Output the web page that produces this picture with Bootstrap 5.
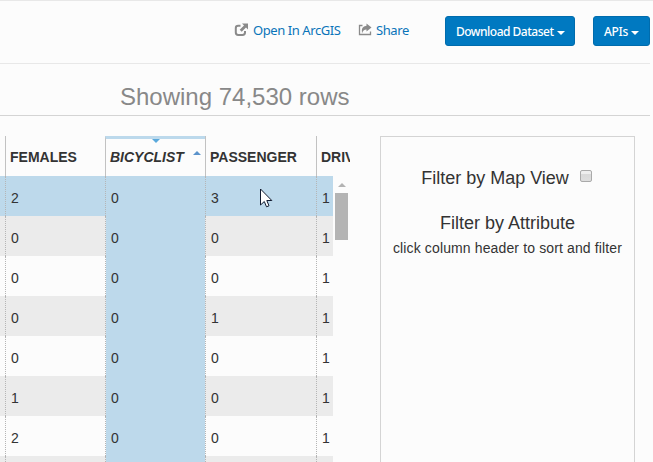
<!DOCTYPE html>
<html lang="en">
<head>
<meta charset="utf-8">
<title>Dataset table</title>
<link rel="stylesheet" href="https://cdn.jsdelivr.net/npm/bootstrap@5.3.0/dist/css/bootstrap.min.css">
<style>
html,body{height:462px;overflow:hidden}
body{background:#fcfcfc;color:#333;font-family:"Liberation Sans",Arial,sans-serif;font-size:14px;line-height:20px}
.topline{height:1px;background:#e8e8e8}
.toolbar{height:63px;width:650px;border-bottom:1px solid #e8e8e8;font-family:"Noto Sans",sans-serif;font-size:13px}
.toolbar a{color:#0a74b9;letter-spacing:-.42px;white-space:nowrap}
.link-label{margin:19px 0 0 4px}
.link-open{margin-left:234px;width:124px}
.link-share{width:87px}
.toolbar .btn{--bs-btn-color:#fff;--bs-btn-bg:#0079c1;--bs-btn-border-color:#006cad;--bs-btn-border-radius:3px;height:30px;margin-top:15px;font-size:12px;line-height:18px;padding:6px 0 4px 10px;text-align:left;letter-spacing:-.5px;font-weight:500;white-space:nowrap}
.toolbar .dropdown-toggle::after{margin-left:4px;border-top-width:4px;border-left-width:4px;border-right-width:4px;vertical-align:1px}
.btn-data{width:130px}
.toolbar .btn-api{width:57px;margin-left:18px;letter-spacing:-.3px}
.toolbar .btn-api::after{margin-left:3px}
.summary{width:650px;height:52px;border-bottom:1px solid #d4d4d4;padding:17px 0 0 120px}
.summary h1{font-size:24px;line-height:32px;color:#888;font-weight:400}
.explorer{padding-top:20px}
.grid-pane{width:350px;height:326px}
.grid-line{display:grid;grid-template-columns:5px 100px 100px 111px 34px}
.grid-head{height:40px;font-weight:700}
.grid-head>div{border-left:1px solid #c2c2c2;padding:11px 0 0 4px;white-space:nowrap;overflow:hidden}
.grid-head>div:first-child{border:0}
.grid-head .sorted{font-style:italic;border-top:3px solid #bcd9ec;padding-top:8px;overflow:visible}
.tri{position:absolute;width:0;height:0;border:4px solid transparent}
.tri-down{left:46px;top:0;border-top-color:#5aa9dc;border-bottom:0}
.tri-up{right:4px;top:12px;border-bottom:4px solid #5b93cb;border-top:0}
.grid-body{width:333px;height:286px}
.grid-body .grid-line{height:40px}
.grid-body .grid-line>div{padding:12px 0 0 5px;border-left:1px dotted #b5b5b5}
.grid-body .grid-line>div:first-child{border:0}
.grid-body .grid-line:nth-child(even){background:#ebebeb}
.grid-body .grid-line.active-line{background:#bdd9eb}
.grid-body .grid-line>div:nth-child(3){background:#bdd9eb;background-clip:padding-box}
.scroller{width:17px;padding:7px 2px 0}
.scroller-up{width:0;height:0;margin:0 auto;border:4px solid transparent;border-top:0;border-bottom-color:#b3b3b3}
.scroller-thumb{width:13px;height:47px;margin-top:6px;background:#b4b4b4}
.filters{width:255px;height:340px;margin-left:30px;border:1px solid #d4d4d4;padding-top:29px}
.filters h2{font-size:18px;line-height:24px;font-weight:400}
.filters .attr-title{margin-top:21px}
.filters p{letter-spacing:.13px;margin-top:3px}
.map-check{width:12px;height:12px;border:1px solid #aaa;border-radius:2px;background:linear-gradient(#eee 30%,#d9d9d9 31%,#dedede);margin:4px 2px 0 11px}
.pointer{position:absolute;left:260px;top:188px}
</style>
<script src="https://cdn.jsdelivr.net/npm/bootstrap@5.3.0/dist/js/bootstrap.bundle.min.js"></script>
</head>
<body>
<div class="topline"></div>
<nav class="toolbar d-flex align-items-start">
  <a class="link-open d-flex text-decoration-none" href="#">
    <svg class="flex-shrink-0" width="15" height="40" viewBox="0 0 15 40"><path d="M6.500 24.800H4.200Q1.800 24.800 1.800 27V31.500Q1.800 33.900 4.200 33.900H8.500Q11 33.900 11 31.500V30" fill="none" stroke="#8a8a8a" stroke-width="2"/><path d="M8 22.500H14V28.500L12 26.500 7.700 30.800 5.700 28.800 10 24.500Z" fill="#8a8a8a"/></svg>
    <span class="link-label">Open In ArcGIS</span>
  </a>
  <a class="link-share d-flex text-decoration-none" href="#">
    <svg class="flex-shrink-0" width="14" height="40" viewBox="0 0 14 40"><path d="M4.500 24.500H1.500V33.500H12.500V30.500" fill="none" stroke="#8a8a8a" stroke-width="1.300"/><path d="M8.500 22.500 13.500 26.500 8.500 30.500V28.500Q5 28.500 4 32.500Q2.500 25.500 8.500 24.800Z" fill="#8a8a8a"/></svg>
    <span class="link-label">Share</span>
  </a>
  <button class="btn btn-data dropdown-toggle" type="button">Download Dataset</button>
  <button class="btn btn-api dropdown-toggle" type="button">APIs</button>
</nav>
<header class="summary"><h1 class="m-0">Showing 74,530 rows</h1></header>
<main class="explorer d-flex align-items-start">
  <section class="grid-pane">
    <div class="grid-line grid-head">
      <div></div><div>FEMALES</div>
      <div class="sorted position-relative">BICYCLIST<span class="tri tri-down"></span><span class="tri tri-up"></span></div>
      <div>PASSENGER</div><div>DRIVER</div>
    </div>
    <div class="d-flex">
      <div class="grid-body overflow-hidden">
        <div class="grid-line active-line"><div></div><div>2</div><div>0</div><div>3</div><div>1</div></div>
        <div class="grid-line"><div></div><div>0</div><div>0</div><div>0</div><div>1</div></div>
        <div class="grid-line"><div></div><div>0</div><div>0</div><div>0</div><div>1</div></div>
        <div class="grid-line"><div></div><div>0</div><div>0</div><div>1</div><div>1</div></div>
        <div class="grid-line"><div></div><div>0</div><div>0</div><div>0</div><div>1</div></div>
        <div class="grid-line"><div></div><div>1</div><div>0</div><div>0</div><div>1</div></div>
        <div class="grid-line"><div></div><div>2</div><div>0</div><div>0</div><div>1</div></div>
        <div class="grid-line"><div></div><div></div><div></div><div></div><div></div></div>
      </div>
      <div class="scroller"><div class="scroller-up"></div><div class="scroller-thumb"></div></div>
    </div>
  </section>
  <aside class="filters text-center">
    <div class="d-flex justify-content-center align-items-start"><h2 class="m-0">Filter by Map View</h2><span class="map-check"></span></div>
    <h2 class="attr-title mb-0">Filter by Attribute</h2>
    <p class="mb-0">click column header to sort and filter</p>
  </aside>
</main>
<svg class="pointer" width="13" height="21" viewBox="0 0 13 21"><path d="M.5 1V17L4.300 13.500 6.500 18.800 9 17.800 6.800 12.500H11.800Z" fill="#fff" stroke="#111a2e"/></svg>
</body>
</html>
